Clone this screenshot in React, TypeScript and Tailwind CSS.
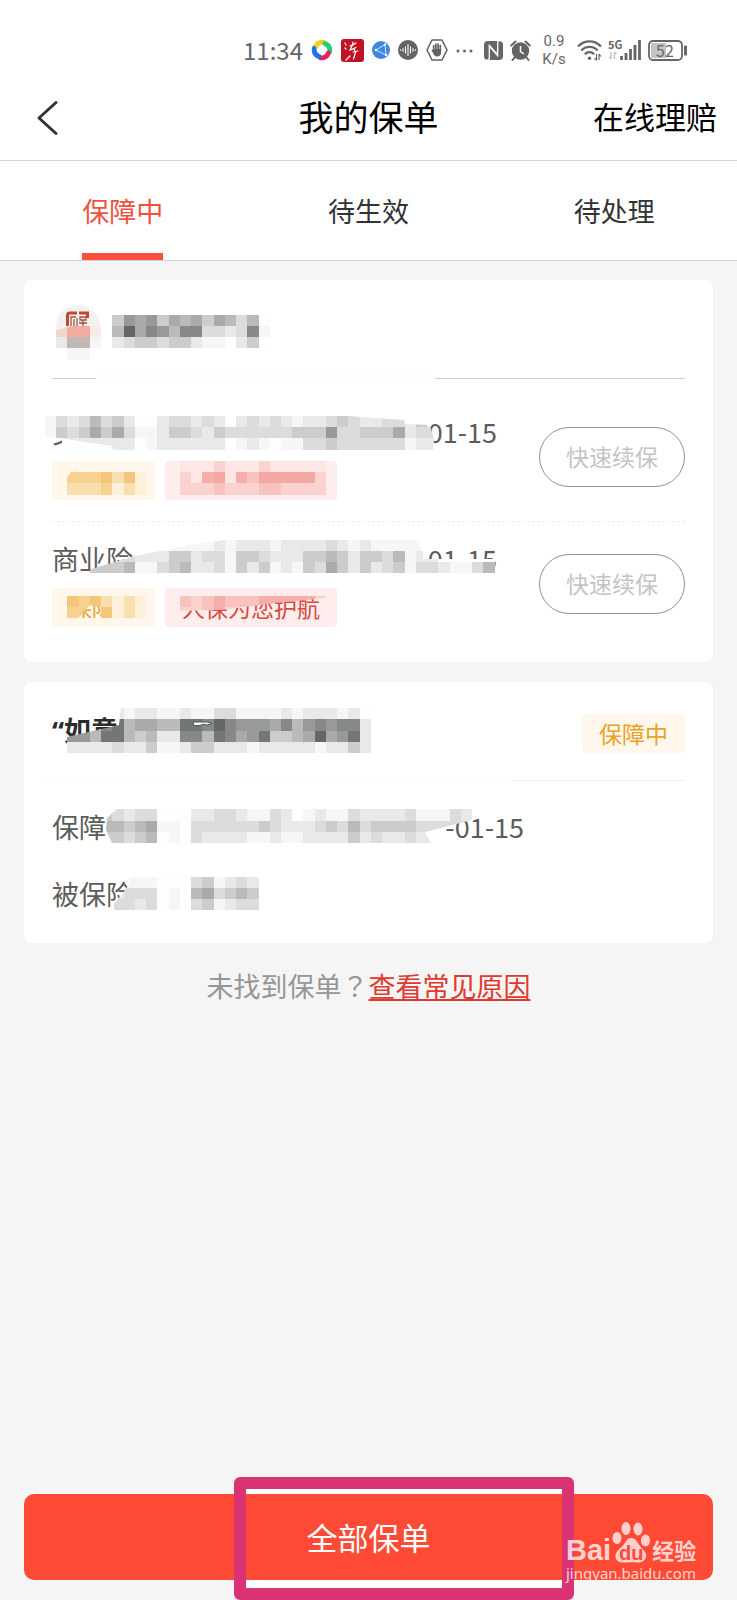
import React from "react";

const CELL = 11.24;

const PALETTE: Record<string, string> = {
  f: "#f6f6f6",
  e: "#e9e9e9",
  d: "#dcdcdc",
  c: "#cccccc",
  b: "#bababa",
  a: "#a9aaa9",
  "9": "#979a97",
  "8": "#868986",
  "7": "#737773",
  "6": "#646864",
  w: "#fefefe",
  // amber
  A: "#f4c57a",
  B: "#f7d190",
  C: "#fadfae",
  D: "#fdf0d8",
  H: "#fff7ec",
  // red
  P: "#f4a8a3",
  Q: "#f5aea9",
  R: "#f8c3be",
  S: "#fad2cf",
  T: "#fde6e4",
  // badge tones
  X: "#f2d5cf",
  Y: "#efac9f",
  Z: "#f7ebe8",
  G: "#c1b9b6",
};

type MosaicProps = {
  id: string;
  col: number;
  row: number;
  rows: string[];
  clip?: string;
};

function Mosaic({ id, col, row, rows, clip }: MosaicProps) {
  return (
    <g clipPath={clip ? `url(#${id})` : undefined} shapeRendering="crispEdges">
      {clip && (
        <clipPath id={id}>
          <polygon points={clip} />
        </clipPath>
      )}
      {rows.map((line, r) =>
        line.split("").map((ch, c) =>
          ch === "." ? null : (
            <rect
              key={`${r}-${c}`}
              x={(col + c) * CELL}
              y={(row + r) * CELL}
              width={CELL}
              height={CELL}
              fill={PALETTE[ch]}
            />
          )
        )
      )}
    </g>
  );
}

function StatusBar() {
  return (
    <div className="flex h-[76px] items-center justify-end gap-[11px] pr-[50px] pt-6 text-[#666]">
      <div className="flex items-center gap-2">
        <span className="text-2xl leading-6">11:34</span>
        <svg className="h-[22px] w-[22px]" viewBox="0 0 22 22">
          <path d="M2.300 7.500C4 1.500 9.500-.2 14 1.300c2.300.9 1.200 3.500-1 3.900-3.500.3-5.500 1.300-6.500 4.300-1.200 2-4.700 1.300-4.200-2Z" fill="#f5d020" />
          <path d="M14.500 2.300C20.500 4 22.200 9.500 20.700 14c-.9 2.300-3.500 1.200-3.900-1-.3-3.500-1.300-5.500-4.300-6.500-2-1.200-1.300-4.700 2-4.200Z" fill="#22d07a" />
          <path d="M19.700 14.500C18 20.500 12.500 22.200 8 20.700c-2.300-.9-1.200-3.500 1-3.900 3.500-.3 5.500-1.300 6.500-4.300 1.200-2 4.700-1.300 4.200 2Z" fill="#ee1f55" />
          <path d="M7.500 19.700C1.500 18-.2 12.500 1.300 8c.9-2.300 3.500-1.200 3.900 1 .3 3.500 1.300 5.500 4.300 6.500 2 1.200 1.300 4.700-2 4.200Z" fill="#1a73f0" />
        </svg>
        <svg className="h-[23px] w-[23px]" viewBox="0 0 23 23">
          <rect width="23" height="23" rx="3" fill="#c01225" />
          <path d="M9 7c2-.5 4-1.500 6-3M12 3c-.5 3-1.500 6-3 8 2-.5 4-1.500 6-2.500M13.500 9c-.5 2 0 3 1.500 4M12 13l5-1M14.500 13l-2 7M9 17l-4 4M4 4l1 2M4 9l1 1" fill="none" stroke="#fff" strokeWidth="1.200" strokeLinecap="round" />
        </svg>
        <svg className="h-[18px] w-[18px]" viewBox="0 0 18 18">
          <circle cx="9" cy="9" r="9" fill="#3f86e0" />
          <path d="M4 9 13 3.500 14 14Z" fill="none" stroke="#cfe2ff" strokeWidth="1" />
          <circle cx="4" cy="9" r="1.300" fill="#e8f1ff" />
          <circle cx="13" cy="3.500" r="1.200" fill="#e8f1ff" />
          <circle cx="14" cy="14" r="1.200" fill="#e8f1ff" />
        </svg>
        <svg className="h-5 w-5" viewBox="0 0 20 20">
          <circle cx="10" cy="10" r="10" fill="#636363" />
          <path d="M2.500 9.300v1.400M5 8.300v3.400M7.500 6.500v7M10 4v12M12.500 6.500v7M15 8.300v3.400M17.500 9.300v1.400" stroke="#fff" strokeWidth="1.100" />
        </svg>
        <svg className="h-[22px] w-[22px]" viewBox="0 0 22 22">
          <path d="M6 1h10l5 10-5 10H6L1 11Z" fill="none" stroke="#636363" strokeWidth="1.600" strokeLinejoin="round" />
          <path d="M7.700 12V6.500M9.900 11V5M12.100 11V5M14.300 12V6.500M6.500 11.500l2 3" stroke="#636363" strokeWidth="1.700" strokeLinecap="round" />
          <path d="M7 10h8v4c0 2-1.500 3.500-4 3.500S7.500 15.500 7 14Z" fill="#636363" />
        </svg>
        <svg className="h-[17px] w-[17px]" viewBox="0 0 17 17" fill="#666">
          <circle cx="2" cy="9" r="1.500" />
          <circle cx="8.500" cy="9" r="1.500" />
          <circle cx="15" cy="9" r="1.500" />
        </svg>
      </div>
      <div className="flex items-center gap-[7px]">
        <svg className="h-[19px] w-[19px]" viewBox="0 0 19 19">
          <rect width="19" height="19" rx="4" fill="#666" />
          <path d="M2 19.500c2 0 3.300-.5 3.300-2.500V5l8.200 9.500V8M17 -.5c-2 0-3.300.5-3.300 2.500v12L5.500 4.500V8" fill="none" stroke="#fff" strokeWidth="1.300" />
        </svg>
        <svg className="h-[21px] w-[21px]" viewBox="0 0 21 21">
          <circle cx="10.500" cy="11" r="8.700" fill="#636363" />
          <path d="M1.200 5.500 5.500 1.500M19.800 5.500 15.500 1.500M4.500 17.500l-2 2.500M16.500 17.500l2 2.500" stroke="#636363" strokeWidth="2" strokeLinecap="round" />
          <path d="M10.500 6v5.500l3.500 2.500" fill="none" stroke="#fff" strokeWidth="1.500" />
        </svg>
      </div>
      <span className="flex w-6 flex-col items-center whitespace-nowrap font-['Roboto'] text-[15px] leading-[18px]">
        <span>0.9</span>
        <span>K/s</span>
      </span>
      <div className="flex items-center gap-[6px]">
        <svg className="h-[21px] w-[25px]" viewBox="0 0 25 21" fill="none" stroke="#666" strokeWidth="2.200">
          <path d="M1 6.500C7.500-.3 17.500-.3 24 6.500" />
          <path d="M4.300 10.500c4.600-4.900 11.800-4.900 16.400 0" />
          <path d="M7.800 14.300c2.600-2.800 6.800-2.800 9.400 0" />
          <circle cx="12.500" cy="18.300" r="1.700" fill="#666" stroke="none" />
          <path d="M19.500 14v6M17.500 18l2 2.500M22 20v-6M24 16.500 22 14" strokeWidth="1.200" />
        </svg>
        <span className="relative h-[22px] w-[34px]">
          <svg className="h-[22px] w-[34px]" viewBox="0 0 34 22">
            <path d="M3 13v7M1 18l2 2M6.500 20v-7M8.500 15l-2-2" stroke="#c4c4c4" strokeWidth="1.400" fill="none" />
            <path d="M13.500 21v-4M18 21v-7M22.500 21V10M27 21V6M31.500 21V1" stroke="#666" strokeWidth="2.800" />
          </svg>
          <span className="absolute left-0 top-0 text-[11px] font-bold leading-[10px]">5G</span>
        </span>
        <span className="relative h-[21px] w-[39px]">
          <svg className="h-[21px] w-[39px]" viewBox="0 0 39 21">
            <rect x="3" y="3" width="15" height="15" fill="#c4c4c4" />
            <rect x="1" y="1" width="33" height="19" rx="4" fill="none" stroke="#666" strokeWidth="1.800" />
            <rect x="36" y="5.500" width="3" height="10" rx="1" fill="#666" />
          </svg>
          <span className="absolute left-0 top-0 w-[34px] text-center text-base leading-[21px]">52</span>
        </span>
      </div>
    </div>
  );
}

const TABS = ["保障中", "待生效", "待处理"];

function Tag({ tone, children }: { tone: "amber" | "red"; children: React.ReactNode }) {
  const colors = tone === "amber" ? "bg-[#fff7ec] text-[#eba223]" : "bg-[#fdeeed] text-[#d9483b]";
  return <span className={`rounded px-[17px] text-[23px] leading-[39px] ${colors}`}>{children}</span>;
}

function PolicyRow({ name, last }: { name: string; last?: boolean }) {
  return (
    <li
      className={`flex items-center justify-between pb-[21px] pt-[18px] ${
        last ? "" : "border-b border-dashed border-[#ededed]"
      }`}
    >
      <div>
        <p className="flex w-[445px] justify-between text-[27px] leading-[38px] text-[#5c5c5c]">
          <span>{name}</span>
          <span>01-15</span>
        </p>
        <p className="mt-[10px] flex gap-[10px]">
          <Tag tone="amber">保障中</Tag>
          <Tag tone="red">人保为您护航</Tag>
        </p>
      </div>
      <button className="h-[60px] w-[146px] rounded-full border border-[#929292] text-[23px] text-[#c4c4c4]">
        快速续保
      </button>
    </li>
  );
}

function VehicleCard() {
  return (
    <section className="relative rounded-lg bg-white px-7 pb-[14px]">
      <header className="flex h-[99px] items-center border-b border-[#cfcfcf] pb-1">
        <svg className="ml-[3px] h-[46px] w-[46px]" viewBox="0 0 46 46">
          <circle cx="23" cy="23" r="22" fill="#f3f2f2" />
          <path d="M12.500 22V11.500q0-2.500 2.500-2.500h7M24 9h8.500v5" fill="none" stroke="#c04a30" strokeWidth="3" />
          <path d="M16 22v-9h5M19 15v7M22 14v9M25 13h6v3h-6zM24 19h8M28 16v7" fill="none" stroke="#a84f3e" strokeWidth="1.300" />
        </svg>
      </header>
      <ul className="pt-[16px]">
        <PolicyRow name="交强险" />
        <PolicyRow name="商业险" last />
      </ul>
      <svg className="pointer-events-none absolute left-0 top-0 h-[382px] w-[689px]" viewBox="24 280 689 382" aria-hidden="true">
        <rect x="96" y="374" width="339" height="8" fill="#fefefe" />
        <Mosaic id="badge" col={5} row={29} rows={["XYYZ", "eGGf", ".ff."]} clip="56,330 90,322 101,326 101,360 56,360" />
        <Mosaic id="owner" col={10} row={28} rows={["c9a9cabacabdbw", "b6a89b88dded8f", "edccdcceffwecw"]} />
        <polygon points="62,436 136,440 136,454 62,454" fill="#fefefe" />
        <Mosaic
          id="compulsory"
          col={4}
          row={37}
          rows={[
            "fdedbdceww" + "eddedewededefeedcdeeddecfee",
            "fcdcacadff" + "eccdecddddddccc9ddcccaedddd",
            "weeeeeeewf" + "eeeeeewfefwffddcddddddfeeee",
          ]}
          clip="45,415 335,415 404,420 405,424 430,425 434,440 433,450 113,450 112,446 45,436"
        />
        <Mosaic
          id="amber1"
          col={6}
          row={41}
          rows={["HHHHHHH", "BBBACAD", "CCCBDCD", "HHHHHHH"]}
          clip="67,477 72,471 88,471 88,466 145,466 145,499 67,499"
        />
        <Mosaic id="red1" col={16} row={41} rows={["TTTSTTTSTTTTT", "STQPTQRPPPPPS", "SSSRSSSRRSSSS"]} />
        <Mosaic
          id="commercial"
          col={8}
          row={48}
          rows={[
            "wwwwwwfffffefeeefeeeedefeffffffwwwww",
            "cdddeeeccedd" + "fccdeeeccbceccdbfeewwwww",
            "cccbffdcbeed" + "fcecfefcdacecedcfddeffdb",
          ]}
          clip="88,573 88,570 135,556 190,545 233,539 415,539 423,552 423,559 497,559 497,573"
        />
        <Mosaic
          id="amber2"
          col={6}
          row={53}
          rows={["ABACDCD", "BBAADCD", "HHHHHHH"]}
          clip="67,594 145,594 145,626 67,626 67,618 101,618 101,607 90,605 78,618 67,618"
        />
        <Mosaic
          id="red2"
          col={16}
          row={53}
          rows={["RSRQRRRQQQQQS", "SSRQSSSSSSSSS"]}
          clip="180,594 326,594 326,598 275,603 220,610 180,611"
        />
      </svg>
    </section>
  );
}

function AccidentCard() {
  return (
    <section className="relative rounded-lg bg-white px-7 pb-[30px]">
      <header className="flex h-[99px] items-center justify-between border-b border-[#efefef]">
        <h2 className="text-[27px] font-bold text-[#2b2b2b]">
          <span className="font-['Noto_Sans']">“</span>如意
        </h2>
        <span className="flex pt-[5px]">
          <Tag tone="amber">保障中</Tag>
        </span>
      </header>
      <div className="flex flex-col gap-[29px] pt-[27px] text-[27px] leading-[38px] text-[#5c5c5c]">
        <p className="flex w-[472px] justify-between">
          <span>保障</span>
          <span>-01-15</span>
        </p>
        <p>被保险</p>
      </div>
      <svg className="pointer-events-none absolute left-0 top-0 h-[262px] w-[689px]" viewBox="24 682 689 262" aria-hidden="true">
        <rect x="46" y="776" width="466" height="8" fill="#fefefe" />
        <Mosaic
          id="product"
          col={6}
          row={63}
          rows={[
            "wwweefeeffeffddffffefeeefew",
            "cca87baabb77868999a8b9898" + "8e",
            "99b77bcbee88b78a97ccba6a9" + "7e",
            "eeeedeecffecceeefeeeeefee" + "ce",
          ]}
          clip="67,737 119,725 121,708 380,708 380,754 67,754"
        />
        <path d="M193 722h14l5 1.500-5 1.500-4-.8-3 1.300h-6Z" fill="#fdfdfd" stroke="#555955" strokeWidth="1" />
        <Mosaic
          id="period"
          col={9}
          row={72}
          rows={[
            "cdedd" + "wwweeddeffdewfeffdeeeedfffde",
            "bbcba" + "ffwddddddcdeeedcdbdccccddddd",
            "ccdcb" + "wfwdeeeeffeffeeeecedeedeewww",
          ]}
          clip="112,843 106,830 107,818 117,809 472,809 472,820 437,829 425,832 431,843"
        />
        <Mosaic
          id="insured"
          col={10}
          row={78}
          rows={["wfffwwwdcfede", "edddwfwbadcbc", "ddedwfwdcfedd"]}
          clip="114,911 114,904 123,893 129,884 129,877 260,877 260,911"
        />
      </svg>
    </section>
  );
}

function Watermark() {
  return (
    <div className="pointer-events-none absolute right-4 top-[41px] w-[131px] text-white opacity-75" aria-hidden="true">
      <div className="flex h-[29px] items-end">
        <span className="font-['Liberation_Sans'] text-[29px] font-bold leading-[28px]">Bai</span>
        <span className="relative mb-px ml-px h-[42px] w-[38px] shrink-0">
          <svg className="h-[42px] w-[38px]" viewBox="0 0 38 42" fill="#fff">
            <ellipse cx="5" cy="17" rx="4.500" ry="6" />
            <ellipse cx="14" cy="7.500" rx="4.500" ry="6.500" />
            <ellipse cx="26" cy="8" rx="4.500" ry="6.500" />
            <ellipse cx="33.500" cy="19.500" rx="4.500" ry="6" />
            <path d="M19 17c5 0 6 4 9 8s7 6 6 11c-1 4-5 6-9 5.500-4-.5-8-.5-12 0C8 42 4 40 3.500 36c-.500-5 4-8 7-11s4-8 8.500-8Z" />
          </svg>
          <span className="absolute inset-x-0 bottom-0 text-center font-['Liberation_Sans'] text-xl font-bold leading-5 text-[#ff4a36]">
            du
          </span>
        </span>
        <span className="ml-[2px] whitespace-nowrap text-[22px] font-bold leading-[30px]">经验</span>
      </div>
      <p className="whitespace-nowrap font-['Noto_Sans'] text-[15px] leading-[18px]">jingyan.baidu.com</p>
    </div>
  );
}

export default function App() {
  return (
    <div className="flex min-h-screen flex-col bg-[#f5f5f5] font-['Noto_Sans_CJK_SC',sans-serif]">
      <div className="bg-white">
        <StatusBar />
        <header className="grid h-[85px] grid-cols-3 items-center border-b border-[#d2d2d2] px-5">
          <button aria-label="返回" className="justify-self-start pl-4">
            <svg className="h-9 w-6" viewBox="0 0 24 36" fill="none" stroke="#333" strokeWidth="3" strokeLinecap="round" strokeLinejoin="round">
              <path d="M20 2.500 3 18l17 15.500" />
            </svg>
          </button>
          <h1 className="justify-self-center whitespace-nowrap pb-1 text-[35px] leading-[48px] text-black">我的保单</h1>
          <a href="#claims" className="justify-self-end whitespace-nowrap pb-1 text-[31px] leading-[44px] text-black">
            在线理赔
          </a>
        </header>
        <nav className="grid h-[100px] grid-cols-3 border-b border-[#d2d2d2]">
          {TABS.map((tab, i) => (
            <button
              key={tab}
              className={`justify-self-center border-b-[7px] pt-[8px] text-[27px] ${
                i === 0 ? "border-[#f8503c] text-[#f0523f]" : "border-transparent text-[#333]"
              }`}
            >
              {tab}
            </button>
          ))}
        </nav>
      </div>

      <main className="flex flex-col gap-5 px-6 pt-[19px]">
        <VehicleCard />
        <AccidentCard />
        <p className="text-center text-[27px] leading-[46px] text-[#969696]">
          未找到保单<span className="font-['Noto_Sans_CJK_TC']">？</span>
          <a href="#reasons" className="text-[#e0392f] underline decoration-2 underline-offset-2">
            查看常见原因
          </a>
        </p>
      </main>

      <footer className="mt-auto px-6 pb-5">
        <div className="relative">
          <span className="absolute -top-[17px] left-[210px] h-[123px] w-[340px] rounded-md bg-white" />
          <button className="relative h-[86px] w-full rounded-[10px] bg-[#ff4a36] text-[31px] text-white">全部保单</button>
          <span className="pointer-events-none absolute -top-[17px] left-[210px] h-[123px] w-[340px] rounded-md border-[12px] border-[#da3374]" />
          <Watermark />
        </div>
      </footer>
    </div>
  );
}
